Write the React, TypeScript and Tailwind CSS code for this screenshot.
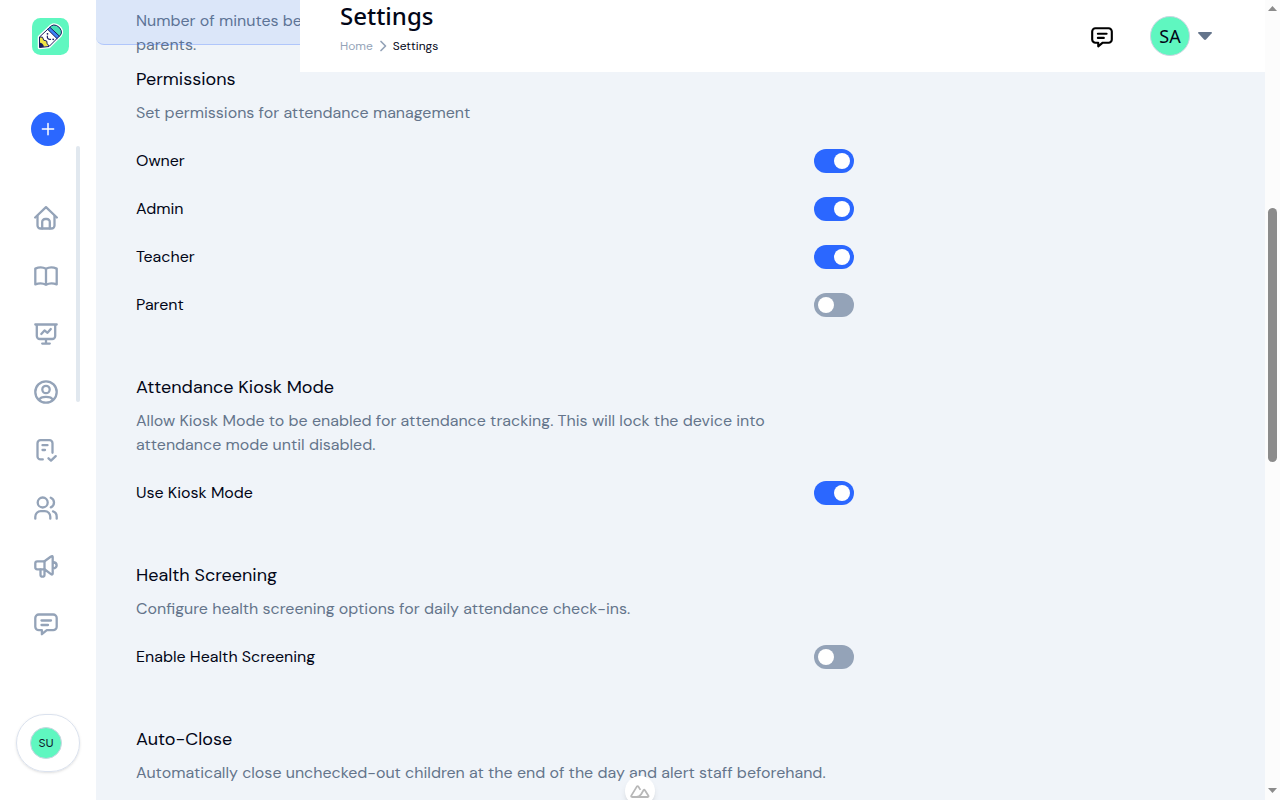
import { useState } from "react";
import type { ReactNode } from "react";

function Icon({ children, className = "w-6 h-6" }: { children: ReactNode; className?: string }) {
  return (
    <svg
      viewBox="0 0 24 24"
      fill="none"
      stroke="currentColor"
      strokeWidth="2.3"
      strokeLinecap="round"
      strokeLinejoin="round"
      className={className}
      aria-hidden="true"
    >
      {children}
    </svg>
  );
}

const messageIcon = (
  <>
    <path d="M4.8 2.5h14.4a3.5 3.5 0 0 1 3.5 3.5v8.7a3.5 3.5 0 0 1-3.5 3.5h-6.4l-4.9 4v-4H4.8a3.5 3.5 0 0 1-3.5-3.5V6a3.5 3.5 0 0 1 3.5-3.5z" />
    <path d="M7.5 8.5H17M7.5 13H14" />
  </>
);

const navLinks = [
  {
    name: "Home",
    icon: (
      <>
        <path d="M1.2 11.500 12 1.200l10.800 10.300" />
        <path d="M3.500 10v9.500a3 3 0 0 0 3 3h11a3 3 0 0 0 3-3V10" />
        <path d="M8.200 22.400V16a3 3 0 0 1 3-3h1.600a3 3 0 0 1 3 3v6.400" />
      </>
    ),
  },
  {
    name: "Lessons",
    icon: (
      <path d="M12 4.800C9 3 4.800 3 1.300 4.600v15.800c3.500-1.300 7.700-1.300 10.700.4 3-1.700 7.200-1.700 10.700-.4V4.600C19.200 3 15 3 12 4.800v16" />
    ),
  },
  {
    name: "Reports",
    icon: (
      <>
        <path d="M1.300 2.500h21.400M2.800 2.500V14a3 3 0 0 0 3 3h12.400a3 3 0 0 0 3-3V2.500M12 17v4.500M8.200 21.600h7.600" />
        <path d="m7.300 12 3.200-3.600 3 2.400 3.300-3.800" />
      </>
    ),
  },
  {
    name: "Profile",
    icon: (
      <>
        <circle cx="12" cy="12" r="10.700" />
        <circle cx="12" cy="9.500" r="3.700" />
        <path d="M5.300 19.500c.8-1.800 3.300-2.700 6.700-2.700s5.900.9 6.700 2.700" />
      </>
    ),
  },
  {
    name: "Attendance",
    icon: (
      <>
        <path d="M8.800 21.400H6.500a3 3 0 0 1-3-3V5.200a3 3 0 0 1 3-3h9a3 3 0 0 1 3 3v9.600" />
        <path d="M8.500 7.200h5M8.500 12h2.500M14.500 20.300l2.500 2.300 4.700-4.500" />
      </>
    ),
  },
  {
    name: "People",
    icon: (
      <>
        <circle cx="8.700" cy="6.500" r="5" />
        <path d="M1.300 22.700v-2a5.500 5.500 0 0 1 5.500-5.500h4a5.500 5.500 0 0 1 5.500 5.500v2M16.800 1.800a5.200 5.200 0 0 1 0 9.600M19 15.400c2.300.7 3.700 2.600 3.700 5.300v2" />
      </>
    ),
  },
  {
    name: "Announcements",
    icon: (
      <>
        <path d="M10.500 7.300H3.300a2 2 0 0 0-2 2v4a2 2 0 0 0 2 2h7.200z" />
        <path d="M10.500 7.300 17 2.500c1-.8 1.700-.5 1.700.6v16.400c0 1.100-.7 1.400-1.700.6l-6.500-4.800M18.700 8c5.300.5 5.300 6.100 0 6.600M6.500 15.300v5.400a2 2 0 0 0 4 0v-5.400" />
      </>
    ),
  },
  { name: "Messages", icon: messageIcon },
];

function Logo() {
  return (
    <svg viewBox="0 0 37 37" className="w-full h-full" aria-hidden="true">
      <rect width="37" height="37" rx="8.500" fill="#5ff7c0" />
      <g strokeLinejoin="round">
        {/* White sticker edge behind the pencil */}
        <path
          d="M7.500 19 19.500 7.800q2-1.500 5-.3 3.500 1.500 4.700 5 .8 2.700-.7 4.500L17 28.500l-9.500 1z"
          fill="#fff"
          stroke="#fff"
          strokeWidth="3.500"
        />
        <path d="m7.500 19 3 .2 1.200 3 3 .8.500 2.800 2 2.200-9.700 1.500z" fill="#f1e443" />
        <path d="M7.500 24.500q3.500.5 4.500 4.300l-4.500.7z" fill="#171a5c" />
        <path d="M17.500 9.500 19.500 7.800q2-1.500 5-.3 3.500 1.500 4.700 5 .8 2.700-.7 4.500l-1.500 1.700z" fill="#45dfb5" />
        <path d="m15.500 11.200 2.300-2 9.700 9-2.300 2.600z" fill="#3b82f6" />
        <path
          d="M7.500 19 19.500 7.800q2-1.500 5-.3 3.500 1.500 4.700 5 .8 2.700-.7 4.500L17 28.500l-9.500 1zM15.500 11.200l9.700 9.600M17.800 9.200l9.700 9M7.500 19l3 .2 1.200 3 3 .8.500 2.800 2 2.200"
          fill="none"
          stroke="#171a5c"
          strokeWidth="1"
        />
        <path d="M15.300 18.200q-.2 3.400 3.200 3.200" fill="none" stroke="#171a5c" strokeWidth="1.200" strokeLinecap="round" />
        <circle cx="15.500" cy="15.800" r=".9" fill="#171a5c" />
        <circle cx="21.200" cy="21.300" r=".9" fill="#171a5c" />
      </g>
    </svg>
  );
}

function Sidebar() {
  return (
    <aside className="w-24 shrink-0 h-full px-4 flex flex-col bg-white">
      <a href="#" aria-label="Dashboard" className="w-[37px] h-[37px] mt-[18px] ml-4 shrink-0">
        <Logo />
      </a>
      <button
        type="button"
        aria-label="Create"
        className="w-[34px] h-[34px] mt-[57px] mx-auto shrink-0 rounded-full bg-[#2b67ff] text-white flex items-center justify-center"
      >
        <Icon className="w-[18px] h-[18px]">
          <path strokeWidth="2" d="M12 4.500v15M4.500 12h15" />
        </Icon>
      </button>

      <div className="flex-1 min-h-0 flex overflow-hidden">
        <nav className="flex-1 pt-[60px] flex flex-col items-center gap-[34px] text-[#94a3b8]">
          {navLinks.map((link) => (
            <a key={link.name} href="#" aria-label={link.name} className="w-6 h-6 shrink-0">
              <Icon>{link.icon}</Icon>
            </a>
          ))}
        </nav>
        <div className="w-1 h-64 rounded-full bg-[#e1e8ef]" />
      </div>

      <button
        type="button"
        aria-label="User menu"
        className="h-[58px] mb-7 shrink-0 pl-[13px] flex items-center rounded-full border border-[#dbe2ee] shadow-sm"
      >
        <span className="w-8 h-8 rounded-full border border-[#cbd5e1] bg-[#5ff7c0] font-['Inter',sans-serif] text-[11px] text-[#0f172a] flex items-center justify-center">
          SU
        </span>
      </button>
    </aside>
  );
}

function Header() {
  return (
    <header className="absolute top-0 right-0 left-[204px] h-[72px] pl-10 pr-[53px] bg-white flex items-center justify-between">
      <div className="h-full">
        <h1 className="font-['Noto_Sans',sans-serif] text-2xl leading-8 font-medium text-[#020617]">Settings</h1>
        <nav aria-label="Breadcrumb" className="mt-1 flex items-center gap-1 text-xs leading-5">
          <a href="#" className="text-[#94a3b8]">Home</a>
          <Icon className="w-3 h-3 text-[#94a3b8]">
            <path strokeWidth="3.500" d="m8 3 9 9-9 9" />
          </Icon>
          <span className="text-[#020617]">Settings</span>
        </nav>
      </div>
      <div className="flex items-center">
        <button type="button" aria-label="Messages" className="pt-0.5 text-black">
          <Icon className="w-[22px] h-[22px]">{messageIcon}</Icon>
        </button>
        <button type="button" aria-label="Account" className="ml-[37px] flex items-center gap-2">
          <span className="w-10 h-10 rounded-full border border-[#cbd5e1] bg-[#5ff7c0] font-['Noto_Sans',sans-serif] text-lg text-[#020617] flex items-center justify-center">
            SA
          </span>
          <svg viewBox="0 0 14 8" className="w-3.5 h-2" aria-hidden="true">
            <path d="M.8 0h12.400q1.200.3.500 1.200L8 7.500q-1 .9-2 0L.3 1.200Q-.3.300.8 0z" fill="#64748b" />
          </svg>
        </button>
      </div>
    </header>
  );
}

function Toggle({ label, initial }: { label: string; initial: boolean }) {
  const [on, setOn] = useState(initial);

  return (
    <label className="flex items-center justify-between h-6 text-base text-[#020617] cursor-pointer">
      {label}
      <input
        type="checkbox"
        role="switch"
        checked={on}
        onChange={() => setOn(!on)}
        className="appearance-none w-10 h-6 p-1 rounded-full bg-[#94a3b8] checked:bg-[#2b67ff] flex checked:justify-end before:content-[''] before:w-4 before:h-4 before:rounded-full before:bg-white cursor-pointer"
      />
    </label>
  );
}

const sections = [
  {
    title: "Permissions",
    description: "Set permissions for attendance management",
    options: [
      { label: "Owner", on: true },
      { label: "Admin", on: true },
      { label: "Teacher", on: true },
      { label: "Parent", on: false },
    ],
  },
  {
    title: "Attendance Kiosk Mode",
    description:
      "Allow Kiosk Mode to be enabled for attendance tracking. This will lock the device into attendance mode until disabled.",
    options: [{ label: "Use Kiosk Mode", on: true }],
  },
  {
    title: "Health Screening",
    description: "Configure health screening options for daily attendance check-ins.",
    options: [{ label: "Enable Health Screening", on: false }],
  },
  {
    title: "Auto-Close",
    description: "Automatically close unchecked-out children at the end of the day and alert staff beforehand.",
    options: [],
  },
];

function Scrollbar() {
  return (
    <div className="w-[15px] shrink-0 h-full py-1 flex flex-col items-center bg-[#fcfcfc]" aria-hidden="true">
      <svg viewBox="0 0 9 5" className="w-[9px] h-[5px] mt-0.5">
        <path d="M4.500 0 9 5H0z" fill="#8b8b8b" />
      </svg>
      <div className="flex-1 w-full flex flex-col items-center">
        <div className="grow-[197]" />
        <div className="grow-[254] w-[9px] rounded-full bg-[#8b8b8b]" />
        <div className="grow-[326]" />
      </div>
      <svg viewBox="0 0 9 5" className="w-[9px] h-[5px] mb-[3px]">
        <path d="M0 0h9L4.500 5z" fill="#8b8b8b" />
      </svg>
    </div>
  );
}

export default function App() {
  return (
    <div className="h-screen flex overflow-hidden bg-[#f0f4f9] font-['DM_Sans','Inter',sans-serif]">
      <Sidebar />

      <div className="relative flex-1 min-w-0 overflow-hidden">
        <main className="max-w-[758px] pl-10 pt-[9px]">
          <p className="text-base leading-6 text-[#64748b]">
            Number of minutes be
            <br />
            parents.
          </p>
          <div className="mt-2 flex flex-col gap-14">
            {sections.map((section) => (
              <section key={section.title}>
                <h2 className="text-lg leading-7 text-[#020617]">{section.title}</h2>
                <p className="mt-2 text-base leading-6 text-[#64748b]">{section.description}</p>
                {section.options.length > 0 && (
                  <div className="mt-6 flex flex-col gap-6">
                    {section.options.map((option) => (
                      <Toggle key={option.label} label={option.label} initial={option.on} />
                    ))}
                  </div>
                )}
              </section>
            ))}
          </div>
        </main>

        <div className="absolute top-0 inset-x-0 h-[45px] rounded-b-lg border-b border-[#2b67ff]/25 bg-[#2b67ff]/10 pointer-events-none" />
        <Header />
      </div>

      <Scrollbar />

      {/* Devtools handle peeking from the bottom edge */}
      <button
        type="button"
        aria-label="Toggle devtools"
        className="fixed -bottom-1.5 left-1/2 -translate-x-1/2 w-[30px] h-[30px] rounded-full bg-white shadow-md flex items-center justify-center"
      >
        <svg viewBox="0 0 20 13" className="w-5 h-[13px]" fill="none" stroke="#b8b8b8" strokeWidth="1.800" strokeLinejoin="round" aria-hidden="true">
          <path d="M10.500 12H2q-1.200-.3-.7-1.400L6.800 1.600q.8-1 1.600 0l2 3.300M6.500 12c3 0 3.500-1 4.500-2.600l2.500-4.200q.7-.9 1.400 0l3.500 5.500q.5 1-.6 1.300H10" />
        </svg>
      </button>
    </div>
  );
}
